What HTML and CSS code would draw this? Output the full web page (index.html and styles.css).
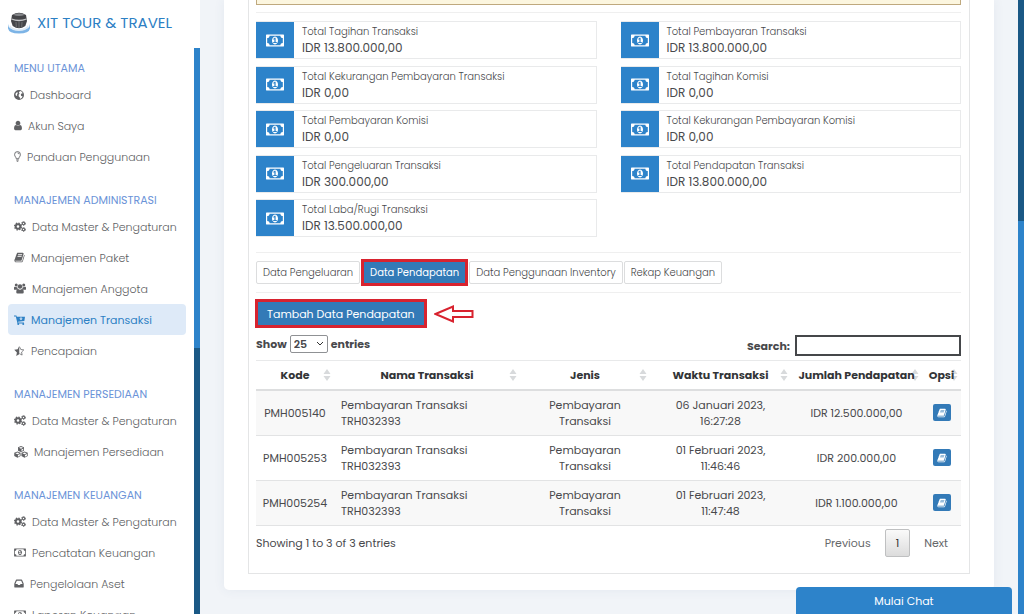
FILE: index.html
```html
<!DOCTYPE html>
<html lang="id">
<head>
<meta charset="utf-8">
<meta name="viewport" content="width=device-width, initial-scale=1">
<title>XIT Tour &amp; Travel - Data Pendapatan</title>
<link rel="stylesheet" href="styles.css">
</head>
<body>
<svg class="sprite" aria-hidden="true">
  <symbol id="money" viewBox="0 0 1920 1792"><path d="M768 1152h384v-96h-128v-448h-114l-148 137 77 80q42-37 55-57h2v288h-128v96zm512-256q0 70-21 142t-59.500 134-101.500 101-138 39-138-39-101.500-101-59.500-134-21-142 21-142 59.500-134 101.500-101 138-39 138 39 101.500 101 59.500 134 21 142zm512 256v-512q-106 0-181-75t-75-181h-1152q0 106-75 181t-181 75v512q106 0 181 75t75 181h1152q0-106 75-181t181-75zm128-832v1152q0 26-19 45t-45 19h-1792q-26 0-45-19t-19-45v-1152q0-26 19-45t45-19h1792q26 0 45 19t19 45z"/></symbol>
  <symbol id="book" viewBox="0 0 1792 1792"><path d="M1703 478q40 57 18 129l-275 906q-19 64-76.500 107.500t-122.500 43.500h-923q-77 0-148.500-53.500t-99.500-131.500q-24-67-2-127 0-4 3-27t4-37q1-8-3-21.500t-3-19.500q2-11 8-21t16.500-23.500 16.500-23.500q23-38 45-91.500t30-91.500q3-10 .5-30t-.5-28q3-11 17-28t17-23q21-36 42-92t25-90q1-9-2.500-32t.5-28q4-13 22-30.500t22-22.500q19-26 42.500-84.500t27.500-96.500q1-8-3-25.500t-2-26.500q2-8 9-18t18-23 17-21q8-12 16.500-30.500t15-35 16-36 19.500-32 26.500-23.500 36-11.500 47.500 5.500l-1 3q38-9 51-9h761q74 0 114 56t18 130l-274 906q-36 119-71.500 153.500t-128.500 34.500h-869q-27 0-38 15-11 16-1 43 24 70 144 70h923q29 0 56-15.500t35-41.500l300-987q7-22 5-57 38 15 59 43zm-1064 2q-4 13 2 22.500t20 9.500h608q13 0 25.500-9.500t16.500-22.500l21-64q4-13-2-22.500t-20-9.500h-608q-13 0-25.500 9.500t-16.500 22.500zm-83 256q-4 13 2 22.500t20 9.500h608q13 0 25.500-9.500t16.500-22.500l21-64q4-13-2-22.500t-20-9.500h-608q-13 0-25.500 9.500t-16.500 22.500z"/></symbol>
  <symbol id="user" viewBox="256 0 1280 1792"><path d="M1536 1399q0 109-62.500 187t-150.500 78h-854q-88 0-150.500-78t-62.500-187q0-85 8.500-160.500t31.500-152 58.500-131 94-89 134.500-34.500q131 128 313 128t313-128q76 0 134.500 34.500t94 89 58.500 131 31.500 152 8.500 160.500zm-256-887q0 159-112.500 271.500t-271.500 112.500-271.500-112.500-112.500-271.500 112.500-271.500 271.500-112.500 271.500 112.500 112.500 271.500z"/></symbol>
  <symbol id="inbox" viewBox="128 0 1536 1792"><path d="M1151 960h316q-1-3-2.500-8.500t-2.500-7.500l-212-496h-708l-212 496q-1 3-2.500 8.500t-2.500 7.500h316l95 192h320zm513 30v482q0 26-19 45t-45 19h-1408q-26 0-45-19t-19-45v-482q0-62 25-123l238-552q10-25 36.500-42t52.500-17h832q26 0 52.500 17t36.500 42l238 552q25 61 25 123z"/></symbol>
  <symbol id="globe" viewBox="0 0 20 20"><path fill-rule="evenodd" d="M10 0a10 10 0 1 0 0 20a10 10 0 0 0 0-20zM12 2c3 .5 4.500 2 5.500 4.500l-2.500.5-1.500 2.500 1 2.500 2.500.5c-.5 2.500-2.500 4.500-5 5l-.5-3-2-1.500-.3-3.500 2-2-1.500-2.500zM3.500 6.500l3-2.500 1 2.500-1.500 2 .5 2-1.500 1.500-2-2z"/></symbol>
  <symbol id="bulb" viewBox="0 0 14 22"><path d="M4.500 15.500c0-3-3.300-4.500-3.300-8.500a5.800 5.800 0 0 1 11.600 0c0 4-3.300 5.500-3.300 8.500zM4.500 18h5M5.500 20.500h3M7 3.800c2 0 3 1 3.200 2.700" fill="none" stroke="currentColor" stroke-width="1.800"/></symbol>
  <symbol id="gears" viewBox="0 0 24 22"><g fill="none" stroke="currentColor"><circle cx="8" cy="11" r="4.500" stroke-width="3.800"/><circle cx="8" cy="11" r="6.900" stroke-width="2.400" stroke-dasharray="2.900 2.520"/><circle cx="19" cy="5" r="2.500" stroke-width="2.200"/><circle cx="19" cy="5" r="4" stroke-width="1.800" stroke-dasharray="2.200 1.990"/><circle cx="19" cy="17" r="2.500" stroke-width="2.200"/><circle cx="19" cy="17" r="4" stroke-width="1.800" stroke-dasharray="2.200 1.990"/></g></symbol>
  <symbol id="users" viewBox="0 0 24 22"><circle cx="4.500" cy="4" r="3"/><circle cx="19.500" cy="4" r="3"/><circle cx="12" cy="7" r="4.500"/><path d="M0 13V9.500Q0 7 2 7.500q2 1.200 4.500.5 0 2.500 1.500 4-2 .2-3 1.500H2Q0 13.500 0 13zM24 13V9.500Q24 7 22 7.500q-2 1.200-4.500.5 0 2.500-1.500 4 2 .2 3 1.500h3q2 0 2-.5zM4.500 18.500q0-6.500 3.800-6.500 3.700 2.500 7.400 0 3.800 0 3.800 6.500 0 2.500-2.500 2.500H7q-2.500 0-2.500-2.500z"/></symbol>
  <symbol id="cart" viewBox="0 0 22 20"><path fill-rule="evenodd" d="M0 1h4.800l.7 2.500H22l-1.300 8.500-12.500 1.400.2 1.600H20v2H7L3.600 3H0zM13 4.500v2.300h-2.500L14 10.500l3.500-3.700H15V4.500z"/><circle cx="8.500" cy="18" r="2"/><circle cx="18.500" cy="18" r="2"/></symbol>
  <symbol id="star" viewBox="0 0 22 20"><path d="M10.500 0v16.500L4.500 20l1.300-7L.5 7.500l6.800-1z"/><path d="M11 1.500l2.600 5.500 6 .8-4.400 4.300 1 6-5.200-2.800" fill="none" stroke="currentColor" stroke-width="1.500"/></symbol>
  <symbol id="cubes" viewBox="0 0 26 22"><path fill-rule="evenodd" d="M13 0l5.500 2.200v6.300L13 11 7.500 8.500V2.200zM9.200 3.300L13 5l3.800-1.700L13 1.800zM13.800 6.300v3l3.200-1.500V5zM6.500 10l5.700 2.300v6.300L6.500 21.500.5 18.600v-6.300zM2.500 13.300l4 1.700 3.900-1.700-3.900-1.600zM7.300 16.400v3.200l3.400-1.700v-3zM19.500 10l6 2.300v6.300l-6 2.900-5.700-2.900v-6.300zM15.600 13.300l3.900 1.700 4-1.700-4-1.600zM20.300 16.400v3.200l3.700-1.700v-3z"/></symbol>
  <symbol id="sort" viewBox="0 0 8 14"><path d="M4 1l3.500 5h-7zM4 13l3.500-5h-7z"/></symbol>
</svg>

<aside class="sidebar">
  <header class="brand">
    <svg class="brand-logo" viewBox="0 0 22 22" aria-hidden="true">
      <path d="M0 12v4.500q1 5 11 5t11-5V12q0 6-11 6T0 12z" fill="#7db4e6"/>
      <path d="M2 13q2 4 9 4t9-4l.5 2Q18 19 11 19t-9.500-4z" fill="#dceaf6"/>
      <path d="M4 3q7-4.500 14 0l1 6-1.700 5q-6.300 4.500-12.600 0L3 9z" fill="#444548"/>
      <path d="M5 2.800q6-3 12 0-6 2.600-12 0z" fill="#85878a"/>
      <path d="M3.500 7q7.500 3 15 0" fill="none" stroke="#c4c5c7" stroke-width="1.300"/>
      <path d="M8 10l.3 5M11 10v6M14 10l-.3 5" stroke="#77787b" stroke-width=".8"/>
    </svg>
    <span>XIT TOUR &amp; TRAVEL</span>
  </header>
  <div class="sidebar-body">
    <nav class="menu" aria-label="Menu">
      <section>
        <h2>MENU UTAMA</h2>
        <a href="#"><svg width="10" height="10"><use href="#globe"/></svg>Dashboard</a>
        <a href="#"><svg width="8" height="11"><use href="#user"/></svg>Akun Saya</a>
        <a href="#"><svg width="7" height="11"><use href="#bulb"/></svg>Panduan Penggunaan</a>
      </section>
      <section>
        <h2>MANAJEMEN ADMINISTRASI</h2>
        <a href="#"><svg width="12" height="11"><use href="#gears"/></svg>Data Master &amp; Pengaturan</a>
        <a href="#"><svg width="11" height="11"><use href="#book"/></svg>Manajemen Paket</a>
        <a href="#"><svg width="12" height="11"><use href="#users"/></svg>Manajemen Anggota</a>
        <a href="#" class="active"><svg width="11" height="10"><use href="#cart"/></svg>Manajemen Transaksi</a>
        <a href="#"><svg width="11" height="10"><use href="#star"/></svg>Pencapaian</a>
      </section>
      <section>
        <h2>MANAJEMEN PERSEDIAAN</h2>
        <a href="#"><svg width="12" height="11"><use href="#gears"/></svg>Data Master &amp; Pengaturan</a>
        <a href="#"><svg width="14" height="12"><use href="#cubes"/></svg>Manajemen Persediaan</a>
      </section>
      <section>
        <h2>MANAJEMEN KEUANGAN</h2>
        <a href="#"><svg width="12" height="11"><use href="#gears"/></svg>Data Master &amp; Pengaturan</a>
        <a href="#"><svg width="12" height="11"><use href="#money"/></svg>Pencatatan Keuangan</a>
        <a href="#"><svg width="10" height="11"><use href="#inbox"/></svg>Pengelolaan Aset</a>
        <a href="#"><svg width="12" height="11"><use href="#money"/></svg>Laporan Keuangan</a>
      </section>
    </nav>
    <div class="track side-track"><div class="thumb"></div></div>
  </div>
</aside>

<main class="page">
  <div class="card">
    <div class="panel">
      <div class="notice"></div>
      <hr class="after-notice">
      <div class="stats">
        <div class="stat"><span class="stat-icon"><svg width="18" height="17"><use href="#money"/></svg></span><p>Total Tagihan Transaksi<strong>IDR 13.800.000,00</strong></p></div>
        <div class="stat"><span class="stat-icon"><svg width="18" height="17"><use href="#money"/></svg></span><p>Total Pembayaran Transaksi<strong>IDR 13.800.000,00</strong></p></div>
        <div class="stat"><span class="stat-icon"><svg width="18" height="17"><use href="#money"/></svg></span><p>Total Kekurangan Pembayaran Transaksi<strong>IDR 0,00</strong></p></div>
        <div class="stat"><span class="stat-icon"><svg width="18" height="17"><use href="#money"/></svg></span><p>Total Tagihan Komisi<strong>IDR 0,00</strong></p></div>
        <div class="stat"><span class="stat-icon"><svg width="18" height="17"><use href="#money"/></svg></span><p>Total Pembayaran Komisi<strong>IDR 0,00</strong></p></div>
        <div class="stat"><span class="stat-icon"><svg width="18" height="17"><use href="#money"/></svg></span><p>Total Kekurangan Pembayaran Komisi<strong>IDR 0,00</strong></p></div>
        <div class="stat"><span class="stat-icon"><svg width="18" height="17"><use href="#money"/></svg></span><p>Total Pengeluaran Transaksi<strong>IDR 300.000,00</strong></p></div>
        <div class="stat"><span class="stat-icon"><svg width="18" height="17"><use href="#money"/></svg></span><p>Total Pendapatan Transaksi<strong>IDR 13.800.000,00</strong></p></div>
        <div class="stat"><span class="stat-icon"><svg width="18" height="17"><use href="#money"/></svg></span><p>Total Laba/Rugi Transaksi<strong>IDR 13.500.000,00</strong></p></div>
      </div>
      <hr class="after-stats">
      <div class="tabs">
        <button type="button" class="tab">Data Pengeluaran</button>
        <button type="button" class="tab selected">Data Pendapatan</button>
        <button type="button" class="tab">Data Penggunaan Inventory</button>
        <button type="button" class="tab">Rekap Keuangan</button>
      </div>
      <hr>
      <div class="add-row">
        <button type="button" class="add">Tambah Data Pendapatan</button>
        <svg class="arrow" width="40" height="18" viewBox="0 0 40 18" aria-hidden="true"><path d="M1.500 9L19 1.500V6h19.500v6H19v4.500z" fill="#fff" stroke="#d8232f" stroke-width="2"/></svg>
      </div>
      <div class="filters">
        <label>Show <select><option>10</option><option selected>25</option><option>50</option></select> entries</label>
        <label class="search">Search: <input type="search"></label>
      </div>
      <table>
        <colgroup><col class="c-kode"><col class="c-nama"><col class="c-jenis"><col class="c-waktu"><col class="c-jumlah"><col class="c-opsi"></colgroup>
        <thead><tr>
          <th>Kode<svg><use href="#sort"/></svg></th><th>Nama Transaksi<svg><use href="#sort"/></svg></th><th>Jenis<svg><use href="#sort"/></svg></th><th>Waktu Transaksi<svg><use href="#sort"/></svg></th><th>Jumlah Pendapatan<svg><use href="#sort"/></svg></th><th>Opsi<svg><use href="#sort"/></svg></th>
        </tr></thead>
        <tbody>
          <tr><td>PMH005140</td><td class="left">Pembayaran Transaksi<br>TRH032393</td><td>Pembayaran<br>Transaksi</td><td>06 Januari 2023,<br>16:27:28</td><td>IDR 12.500.000,00</td><td><button type="button" class="detail" aria-label="Detail"><svg width="10" height="10"><use href="#book"/></svg></button></td></tr>
          <tr><td>PMH005253</td><td class="left">Pembayaran Transaksi<br>TRH032393</td><td>Pembayaran<br>Transaksi</td><td>01 Februari 2023,<br>11:46:46</td><td>IDR 200.000,00</td><td><button type="button" class="detail" aria-label="Detail"><svg width="10" height="10"><use href="#book"/></svg></button></td></tr>
          <tr><td>PMH005254</td><td class="left">Pembayaran Transaksi<br>TRH032393</td><td>Pembayaran<br>Transaksi</td><td>01 Februari 2023,<br>11:47:48</td><td>IDR 1.100.000,00</td><td><button type="button" class="detail" aria-label="Detail"><svg width="10" height="10"><use href="#book"/></svg></button></td></tr>
        </tbody>
      </table>
      <div class="table-foot">
        <span class="info">Showing 1 to 3 of 3 entries</span>
        <div class="pager"><a href="#">Previous</a><a href="#" class="current">1</a><a href="#">Next</a></div>
      </div>
    </div>
  </div>
</main>
<div class="track page-track"><div class="thumb"></div></div>
<button type="button" class="chat">Mulai Chat</button>
</body>
</html>
```
FILE: styles.css
```css
* { box-sizing: border-box; }

body {
  margin: 0;
  height: 100vh;
  overflow: hidden;
  display: flex;
  background: #f1f4f8;
  color: #48494c;
  font: 11px/16px Poppins, Inter, "Liberation Sans", sans-serif;
}

svg { fill: currentColor; flex: none; }
button, input, select { font: inherit; color: inherit; margin: 0; }
a { color: inherit; text-decoration: none; }
.sprite { position: absolute; width: 0; height: 0; }

/* Sidebar */
.sidebar {
  width: 200px;
  flex: none;
  display: flex;
  flex-direction: column;
  background: #fff;
}
.brand {
  height: 48px;
  flex: none;
  display: flex;
  align-items: center;
  gap: 7px;
  padding: 0 8px 3px;
  color: #2d80c4;
  font-size: 15px;
  white-space: nowrap;
}
.brand-logo { width: 22px; height: 22px; }
.sidebar-body { flex: 1; min-height: 0; display: flex; }
.menu {
  flex: 1;
  min-width: 0;
  overflow: hidden;
  padding: 9px 8px 0;
  display: flex;
  flex-direction: column;
  gap: 17px;
  color: #606164;
}
.menu h2 {
  margin: 0;
  padding-left: 6px;
  font-size: 11px;
  font-weight: 400;
  line-height: 22px;
  color: #6b93d8;
  white-space: nowrap;
}
.menu a {
  height: 31px;
  width: 178px;
  padding-left: 6px;
  display: flex;
  align-items: center;
  gap: 6px;
  border-radius: 4px;
  font-weight: 300;
  white-space: nowrap;
}
.menu .active { background: #deeaf8; color: #2d80c4; font-weight: 400; }

.track { width: 6px; flex: none; background: #1a5885; }
.thumb { background: #2d83ca; }
.side-track .thumb { height: 53%; }
.page-track { display: flex; align-items: flex-end; }
.page-track .thumb { width: 100%; height: 64%; }

/* Content */
.page { flex: 1; min-width: 0; padding: 0 24px; }
.card {
  background: #fff;
  padding: 0 24px 16px;
  border-radius: 0 0 5px 5px;
  box-shadow: 0 0 12px rgba(60, 90, 130, .07);
}
.panel {
  border: 1px solid #e4e5e6;
  border-top: 0;
  padding: 0 8px 16px 7px;
}
.notice {
  height: 5px;
  background: #fcf6df;
  border: 1px solid #bfa97e;
  border-top: 0;
}
hr { margin: 8px 0; border: 0; border-top: 1px solid #efefef; }
hr.after-notice { margin-top: 7px; }

.stats {
  height: 216px;
  display: grid;
  grid-template-columns: 1fr 1fr;
  column-gap: 24px;
  align-content: space-between;
}
.stat { height: 38px; display: flex; border: 1px solid #e9eaeb; border-left: 0; }
.stat-icon {
  width: 38px;
  flex: none;
  display: grid;
  place-items: center;
  background: #2d83ca;
  color: #fff;
}
.stat p { margin: 0; padding: 2px 8px; font-size: 10px; font-weight: 300; white-space: nowrap; }
.stat strong { display: block; font-size: 12px; font-weight: 400; }
hr.after-stats { margin-top: 15px; }

.tabs { display: flex; gap: 1px; align-items: center; height: 23px; }
.tab {
  height: 23px;
  padding: 0 6px;
  border: 1px solid #dcddde;
  border-radius: 2px;
  background: #fff;
  font-size: 10px;
  font-weight: 300;
  white-space: nowrap;
}
.tab.selected {
  height: 27px;
  border: 3px solid #d8232f;
  border-radius: 0;
  background: #337ab7;
  color: #fff;
  font-weight: 400;
}
.add-row { display: flex; align-items: center; gap: 7px; margin: -2px 0 7px -1px; }
.add {
  height: 29px;
  padding: 0 9px;
  border: 3px solid #d8232f;
  background: #337ab7;
  color: #fff;
}

.filters { display: flex; justify-content: space-between; height: 25px; font-weight: 700; }
.filters label { display: flex; align-items: center; height: 18px; gap: 3px; }
.filters select {
  width: 38px;
  height: 18px;
  padding: 0 3px;
  appearance: none;
  border: 1px solid #8f9194;
  border-radius: 2px;
  background: #fff url("data:image/svg+xml,%3Csvg xmlns='http://www.w3.org/2000/svg' width='8' height='6'%3E%3Cpath d='M1 1l3 3 3-3' fill='none' stroke='%23333'/%3E%3C/svg%3E") no-repeat right 3px center;
  font-weight: 600;
}
.filters .search { height: 21px; gap: 5px; }
.filters input {
  width: 166px;
  height: 21px;
  border: 2px solid #45474a;
  border-radius: 0;
  background: #fff;
}

table {
  width: 100%;
  table-layout: fixed;
  border-collapse: collapse;
  border-top: 1px solid #e8e9ea;
}
.c-kode { width: 78px; }
.c-nama { width: 186px; }
.c-jenis { width: 130px; }
.c-waktu { width: 141px; }
.c-jumlah { width: 131px; }
.c-opsi { width: 39px; }
th {
  position: relative;
  z-index: 0;
  height: 29px;
  padding: 0;
  border-bottom: 2px solid #dddedf;
  font-weight: 700;
  color: #333537;
  white-space: nowrap;
}
th svg {
  position: absolute;
  z-index: -1;
  right: 3px;
  top: 7px;
  width: 8px;
  height: 14px;
  color: #d8dadc;
}
td {
  padding: 6px 0;
  border-bottom: 1px solid #e2e3e4;
  text-align: center;
}
td.left { text-align: left; padding-left: 7px; }
tbody tr:nth-child(odd) { background: #f8f8f8; }
.detail {
  width: 18px;
  height: 17px;
  padding: 0;
  display: inline-grid;
  place-items: center;
  vertical-align: middle;
  border: 0;
  border-radius: 2px;
  background: #337ab7;
  color: #fff;
}

.table-foot { display: flex; justify-content: space-between; padding-top: 3px; }
.info { padding-top: 6px; }
.pager { display: flex; gap: 1px; color: #66686b; }
.pager a { padding: 5px 12px; border: 1px solid transparent; border-radius: 2px; }
.pager .current {
  padding: 5px 10px;
  border-color: #bfc0c1;
  background: linear-gradient(#fafafa, #dcdcdc);
  color: #333;
}

.chat {
  position: fixed;
  right: 12px;
  bottom: 0;
  width: 216px;
  height: 27px;
  border: 0;
  border-radius: 4px 4px 0 0;
  background: #2d83ca;
  color: #fff;
}
```
